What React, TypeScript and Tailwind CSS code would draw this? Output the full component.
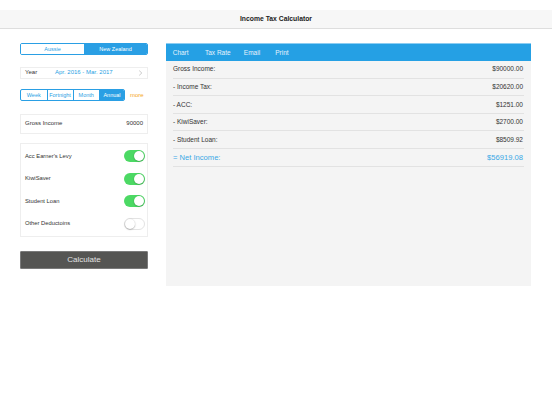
import { FC } from "react";

const font = { fontFamily: '"Liberation Sans", Arial, sans-serif' };

const Toggle: FC<{ on: boolean }> = ({ on }) =>
  on ? (
    <div className="w-[21px] h-[12px] rounded-full bg-[#4cd964] flex items-center justify-end pr-[1px]">
      <div className="w-[10px] h-[10px] rounded-full bg-white shadow-[0_0.5px_1.5px_rgba(0,0,0,0.35)]" />
    </div>
  ) : (
    <div className="w-[21px] h-[12px] rounded-full bg-white border border-[#e3e3e3] flex items-center pl-[0.5px]">
      <div className="w-[10px] h-[10px] rounded-full bg-white shadow-[0_0.5px_1.5px_rgba(0,0,0,0.4)]" />
    </div>
  );

const rows = [
  ["Gross Income:", "$90000.00"],
  ["- Income Tax:", "$20620.00"],
  ["- ACC:", "$1251.00"],
  ["- KiwiSaver:", "$2700.00"],
  ["- Student Loan:", "$8509.92"],
];

export default function App() {
  return (
    <div className="w-[552px] h-[414px] bg-white text-[#333]" style={font}>
      {/* nav bar */}
      <div className="mt-[10px] h-[19px] bg-[#f7f7f7] border-b border-[#dedede] flex items-center justify-center">
        <span className="text-[6.8px] font-bold text-[#222]">Income Tax Calculator</span>
      </div>

      <div className="flex pt-[14px] pl-[20px]">
        {/* left column */}
        <div className="w-[128px] flex flex-col">
          <div className="h-[11.5px] flex border border-[#2a9fe4] rounded-[2px] overflow-hidden text-[5.5px]">
            <div className="flex-1 flex items-center justify-center text-[#2a9fe4] bg-white">Aussie</div>
            <div className="flex-1 flex items-center justify-center text-white bg-[#2a9fe4]">New Zealand</div>
          </div>

          <div className="mt-[12px] h-[12px] flex items-center bg-white border border-[#eeeeee] pl-[4px] pr-[4px] text-[6px]">
            <span className="w-[30px]">Year</span>
            <span className="text-[#2a9fe4]">Apr. 2016 - Mar. 2017</span>
            <svg className="ml-auto" width="5" height="6" viewBox="0 0 5 6">
              <path d="M1.2 0.6 L3.8 3 L1.2 5.4" fill="none" stroke="#b5b5b5" strokeWidth="0.7" />
            </svg>
          </div>

          <div className="mt-[10.5px] flex items-center">
            <div className="w-[105px] h-[12px] flex border border-[#2a9fe4] rounded-[2px] overflow-hidden text-[5.5px] text-[#2a9fe4]">
              <div className="w-[26.5px] flex items-center justify-center border-r border-[#2a9fe4]">Week</div>
              <div className="w-[26px] flex items-center justify-center border-r border-[#2a9fe4]">Fortnight</div>
              <div className="w-[26.5px] flex items-center justify-center border-r border-[#2a9fe4]">Month</div>
              <div className="flex-1 flex items-center justify-center bg-[#2a9fe4] text-white">Annual</div>
            </div>
            <span className="ml-[5px] text-[6px] text-[#f5a623]">more</span>
          </div>

          <div className="mt-[13px] h-[19.5px] flex items-center justify-between bg-white border border-[#eeeeee] px-[4px] text-[6px]">
            <span>Gross Income</span>
            <span>90000</span>
          </div>

          <div className="mt-[9.5px] bg-white border border-[#eeeeee] py-[1px] pl-[4px] pr-[2.5px] text-[5.8px]">
            {[
              ["Acc Earner's Levy", true],
              ["KiwiSaver", true],
              ["Student Loan", true],
              ["Other Deductoins", false],
            ].map(([label, on]) => (
              <div key={label as string} className="h-[22.5px] flex items-center justify-between">
                <span>{label}</span>
                <Toggle on={on as boolean} />
              </div>
            ))}
          </div>

          <button className="mt-[14px] h-[18px] bg-[#555553] border border-[#7a7a7a] rounded-[1px] text-[8px] text-[#e2e2e2]">
            Calculate
          </button>
        </div>

        {/* right column */}
        <div className="ml-[18px] w-[365px] h-[243px] bg-[#f4f4f4] flex flex-col">
          <div className="h-[18px] bg-[#25a0e4] border-t border-[#8ccdf2] flex items-center pl-[6.7px] text-[6.5px] text-[#e6f3fc]">
            <span>Chart</span>
            <span className="ml-[16.4px]">Tax Rate</span>
            <span className="ml-[13.2px]">Email</span>
            <span className="ml-[15.2px]">Print</span>
          </div>
          <div className="px-[7px]">
            {rows.map(([k, v]) => (
              <div key={k} className="h-[17.6px] flex items-center justify-between border-b border-[#e2e2e2] text-[6.5px] pr-[1px]">
                <span>{k}</span>
                <span>{v}</span>
              </div>
            ))}
            <div className="h-[17.8px] flex items-center justify-between border-b border-[#e2e2e2] text-[7.6px] text-[#3aa8e6] pr-[1px]">
              <span>= Net Income:</span>
              <span>$56919.08</span>
            </div>
          </div>
        </div>
      </div>
    </div>
  );
}
